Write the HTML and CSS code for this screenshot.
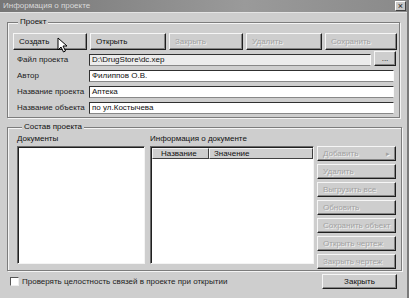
FILE: index.html
```html
<!DOCTYPE html>
<html lang="ru">
<head>
<meta charset="utf-8">
<title>Информация о проекте</title>
<link rel="stylesheet" href="styles.css">
</head>
<body>
<div class="window">
  <div class="titlebar">
    <span class="title">Информация о проекте</span>
    <span class="close">×</span>
  </div>
  <div class="content">
    <div class="group group-project">
      <div class="group-title">Проект</div>
      <div class="btn-row">
        <div class="btn w74">Создать</div>
        <div class="btn w76">Открыть</div>
        <div class="btn w74 disabled">Закрыть</div>
        <div class="btn w76 disabled">Удалить</div>
        <div class="btn w72 disabled">Сохранить</div>
      </div>
      <div class="fields">
        <div class="field field-file">
          <span class="label">Файл проекта</span>
          <div class="input input-file">D:\DrugStore\dc.xep</div>
          <div class="btn btn-browse">...</div>
        </div>
        <div class="field">
          <span class="label">Автор</span>
          <div class="input">Филиппов О.В.</div>
        </div>
        <div class="field">
          <span class="label">Название проекта</span>
          <div class="input">Аптека</div>
        </div>
        <div class="field">
          <span class="label">Название объекта</span>
          <div class="input">по ул.Костычева</div>
        </div>
      </div>
    </div>

    <div class="group group-compose">
      <div class="group-title">Состав проекта</div>
      <div class="columns">
        <div class="col col-docs">
          <div class="col-label">Документы</div>
          <div class="listbox"></div>
        </div>
        <div class="col col-info">
          <div class="col-label">Информация о документе</div>
          <div class="listview">
            <div class="lv-header">
              <div class="lv-cell lv-name">Название</div>
              <div class="lv-cell lv-value">Значение</div>
            </div>
          </div>
        </div>
        <div class="col col-actions">
          <div class="btn side disabled"><span>Добавить</span><span class="arrow">▸</span></div>
          <div class="btn side disabled">Удалить</div>
          <div class="btn side disabled">Выгрузить все</div>
          <div class="btn side disabled">Обновить</div>
          <div class="btn side disabled">Сохранить объект</div>
          <div class="btn side disabled">Открыть чертеж</div>
          <div class="btn side disabled">Закрыть чертеж</div>
        </div>
      </div>
    </div>

    <div class="footer">
      <label class="check">
        <span class="checkbox"></span>
        <span>Проверять целостность связей в проекте при открытии</span>
      </label>
      <div class="btn btn-close">Закрыть</div>
    </div>
  </div>
  <svg class="cursor" width="11" height="16" viewBox="0 0 11 16">
    <path d="M1 1 L1 13 L4 10 L6.5 15 L8.5 14 L6 9 L10 9 Z" fill="#fff" stroke="#000" stroke-width="1"/>
  </svg>
</div>
</body>
</html>
```

FILE: styles.css
```css
* { box-sizing: border-box; }
html, body {
  margin: 0;
  padding: 0;
}
body {
  width: 409px;
  height: 298px;
  overflow: hidden;
  background: #cecece;
  font-family: "Liberation Sans", Arial, sans-serif;
  font-size: 8px;
  color: #111;
}
.window {
  position: relative;
  width: 409px;
  height: 298px;
  border-right: 2px solid #7a7a7a;
}
.titlebar {
  height: 13px;
  display: flex;
  align-items: center;
  justify-content: space-between;
  padding: 0 1px 0 3px;
  background: linear-gradient(to right, #767676, #9a9a9a 60%, #8a8a8a);
  border-bottom: 1px solid #e4e4e4;
}
.title {
  color: #d9d9d9;
  font-size: 8px;
  line-height: 12px;
}
.close {
  width: 11px;
  height: 10px;
  background: #c8c8c8;
  border: 1px solid;
  border-color: #fff #404040 #404040 #fff;
  font-size: 9px;
  line-height: 8px;
  text-align: center;
  color: #222;
}
.content {
  padding: 0 0 0 7px;
}
.group {
  border: 1px solid #7c7c7c;
  box-shadow: inset 1px 1px 0 #f4f4f4, 1px 1px 0 #f4f4f4;
}
.group-title {
  display: block;
  width: max-content;
  height: 10px;
  margin: -6px 0 0 5px;
  padding: 0 2px;
  line-height: 10px;
  background: #cecece;
}
.group-project {
  margin-top: 9px;
  width: 393px;
  height: 96px;
  padding-left: 5px;
}
.btn-row {
  display: flex;
  gap: 3px;
  margin-top: 6px;
}
.btn {
  height: 17px;
  background: #cecece;
  border: 1px solid;
  border-color: #f6f6f6 #1e1e1e #1e1e1e #f6f6f6;
  box-shadow: inset -1px -1px 0 #858585;
  padding: 0 5px;
  display: flex;
  align-items: center;
  line-height: 10px;
  white-space: nowrap;
  color: #111;
}
.btn.disabled {
  color: #a2a2a2;
  text-shadow: 1px 1px 0 #f2f2f2;
}
.w72 { width: 72px; }
.w74 { width: 74px; }
.w76 { width: 76px; }
.fields {
  display: flex;
  flex-direction: column;
  gap: 4px;
  margin-top: 1px;
}
.field {
  display: flex;
  align-items: flex-end;
  height: 12px;
}
.field-file {
  height: 15px;
}
.label {
  width: 76px;
  padding-left: 4px;
  line-height: 12px;
  color: #222;
}
.input {
  width: 305px;
  height: 12px;
  background: #fff;
  border-top: 1px solid #303030;
  border-left: 1px solid #303030;
  border-bottom: 1px solid #888;
  border-right: 1px solid #fafafa;
  padding: 0 2px;
  line-height: 10px;
  color: #111;
}
.input-file {
  width: 282px;
  background: #ececec;
}
.btn-browse {
  width: 22px;
  height: 15px;
  margin-left: 3px;
  justify-content: center;
  padding: 0;
}
.group-compose {
  margin-top: 9px;
  width: 395px;
  height: 144px;
  padding-left: 9px;
}
.columns {
  display: flex;
  margin-top: 2px;
}
.col-label {
  line-height: 10px;
  margin-bottom: 2px;
  white-space: nowrap;
}
.col-docs { width: 128px; }
.col-info { width: 164px; margin-left: 5px; }
.col-actions {
  width: 79px;
  margin-left: 3px;
  margin-top: 12px;
  display: flex;
  flex-direction: column;
  gap: 3px;
}
.listbox, .listview {
  height: 118px;
  background: #fff;
  border-top: 1px solid #6a6a6a;
  border-left: 1px solid #6a6a6a;
  border-right: 1px solid #f4f4f4;
  border-bottom: 1px solid #f4f4f4;
  box-shadow: inset 1px 1px 0 #202020;
}
.listview {
  padding: 1px 0 0 1px;
}
.lv-header {
  display: flex;
  height: 11px;
}
.lv-cell {
  background: #cecece;
  border: 1px solid;
  border-color: #f6f6f6 #404040 #404040 #f6f6f6;
  line-height: 9px;
  padding-left: 8px;
  color: #111;
}
.lv-name { width: 57px; }
.lv-value { flex: 1; padding-left: 4px; }
.btn.side {
  height: 15px;
  justify-content: space-between;
}
.arrow {
  font-size: 7px;
}
.footer {
  display: flex;
  align-items: center;
  justify-content: space-between;
  width: 387px;
  margin-top: 3px;
  margin-left: 3px;
}
.check {
  display: flex;
  align-items: center;
  gap: 3px;
  line-height: 10px;
  color: #222;
}
.checkbox {
  width: 9px;
  height: 9px;
  background: #fff;
  border-top: 1px solid #555;
  border-left: 1px solid #555;
  border-right: 1px solid #eee;
  border-bottom: 1px solid #eee;
}
.btn-close {
  width: 75px;
  height: 15px;
  justify-content: center;
}
.cursor {
  position: absolute;
  left: 57px;
  top: 37px;
}
```
